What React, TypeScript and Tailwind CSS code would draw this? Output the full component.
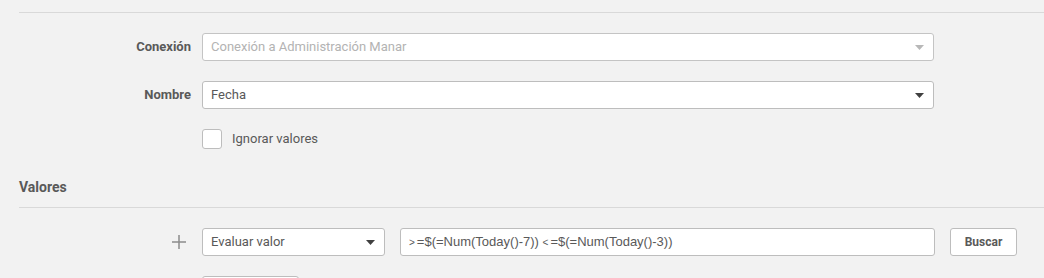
import React from "react";

function Caret({ light }: { light?: boolean }) {
  return (
    <svg width="9" height="5" viewBox="0 0 9 5" className="shrink-0">
      <path d="M0 0 L9 0 L4.5 5 Z" fill={light ? "#b8b8b8" : "#404040"} />
    </svg>
  );
}

function SectionHeader({ title, className }: { title: string; className?: string }) {
  return (
    <div className={"ml-[19px] border-b border-[#d9d9d9] pb-[10px] " + (className ?? "")}>
      <div className="text-[14px] leading-[20px] font-bold text-[#595959]">{title}</div>
    </div>
  );
}

export default function App() {
  return (
    <div
      className="w-[1044px] h-[278px] overflow-hidden bg-[#f2f2f2] text-[#595959]"
      style={{ fontFamily: "Roboto, 'Liberation Sans', sans-serif" }}
    >
      <SectionHeader title="Campo" className="mt-[-18px]" />

      <div className="flex flex-col gap-[20px] pt-[20px]">
        <div className="flex items-center">
          <div className="ml-[19px] w-[172px] text-right text-[13px] font-bold">Conexión</div>
          <div className="ml-[11px] w-[732px] h-[28px] bg-white border border-[#c4c4c4] rounded-[3px] flex items-center justify-between pl-[8px] pr-[9px]">
            <span className="text-[13px] text-[#b3b3b3]">Conexión a Administración Manar</span>
            <Caret light />
          </div>
        </div>

        <div className="flex items-center">
          <div className="ml-[19px] w-[172px] text-right text-[13px] font-bold">Nombre</div>
          <div className="ml-[11px] w-[732px] h-[28px] bg-white border border-[#bdbdbd] rounded-[3px] flex items-center justify-between pl-[8px] pr-[9px]">
            <span className="text-[13px] text-[#595959]">Fecha</span>
            <Caret />
          </div>
        </div>

        <div className="flex items-center pl-[202px]">
          <div className="w-[20px] h-[20px] bg-white border border-[#bdbdbd] rounded-[3px]" />
          <span className="ml-[10px] text-[13px] text-[#595959]">Ignorar valores</span>
        </div>
      </div>

      <SectionHeader title="Valores" className="mt-[28px]" />

      <div className="flex flex-col gap-[20px] pt-[20px]">
        <div className="flex items-center">
          <div className="w-[202px] flex justify-end pr-[16px]">
            <svg width="14" height="14" viewBox="0 0 14 14">
              <path d="M7 0 V14 M0 7 H14" stroke="#8c8c8c" strokeWidth="1.5" />
            </svg>
          </div>
          <div className="w-[183px] h-[28px] bg-white border border-[#bdbdbd] rounded-[3px] flex items-center justify-between pl-[8px] pr-[9px]">
            <span className="text-[13px] text-[#595959]">Evaluar valor</span>
            <Caret />
          </div>
          <div
            className="ml-[15px] w-[535px] h-[28px] bg-white border border-[#bdbdbd] rounded-[3px] flex items-center pl-[8px] text-[13px] text-[#595959]"
            style={{ fontFamily: "'Liberation Sans', Arial, sans-serif" }}
          >
            <span>
              <span className="text-[10px] mr-[2px]">&gt;</span>=$(=Num(Today()-7)){" "}
              <span className="text-[10px] mr-[2px]">&lt;</span>=$(=Num(Today()-3))
            </span>
          </div>
          <button className="ml-[15px] w-[67px] h-[28px] bg-white border border-[#bdbdbd] rounded-[3px] text-[12px] font-bold text-[#595959]">
            Buscar
          </button>
        </div>

        <div className="pl-[202px]">
          <div className="w-[97px] h-[28px] bg-white border border-[#bdbdbd] rounded-[3px]" />
        </div>
      </div>
    </div>
  );
}
